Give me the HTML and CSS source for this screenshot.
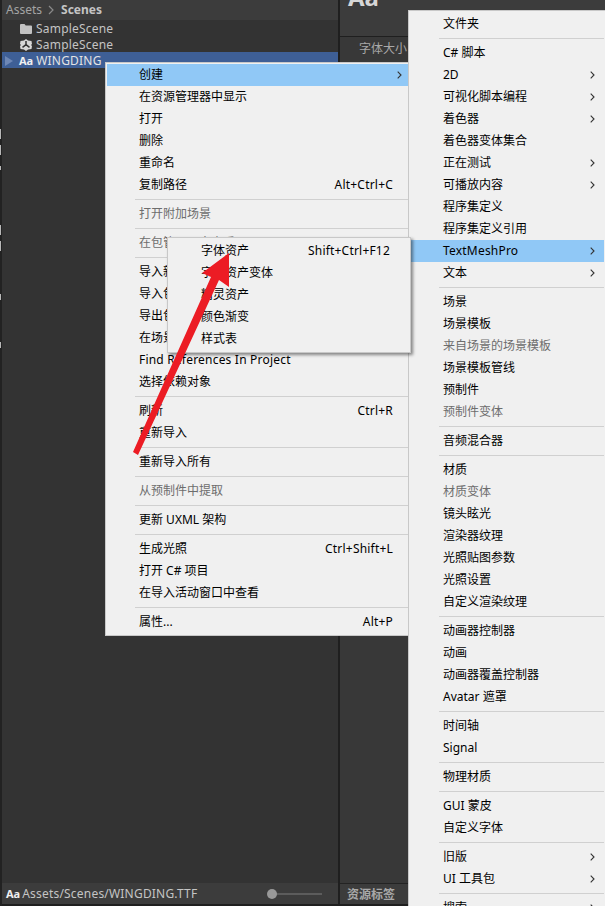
FILE: index.html
```html
<!DOCTYPE html>
<html lang="zh-CN">
<head>
<meta charset="utf-8">
<title>Unity Project Context Menu</title>
<link rel="stylesheet" href="styles.css">
</head>
<body>
<div class="editor">
  <div class="edge"></div>
  <section class="project">
    <header class="crumbs">
      <span>Assets</span>
      <svg class="crumb-sep" width="6" height="10" viewBox="0 0 6 10"><path d="M1 1l4 4-4 4" fill="none" stroke="#8a8a8a" stroke-width="1.2"/></svg>
      <strong>Scenes</strong>
    </header>
    <div class="assets">
      <div class="asset">
        <svg class="asset-icon" width="12" height="12" viewBox="0 0 12 12"><path d="M0 2a1 1 0 0 1 1-1h3.500l1.200 1.500H11a1 1 0 0 1 1 1V10a1 1 0 0 1-1 1H1a1 1 0 0 1-1-1z" fill="#c2c2c2"/></svg>
        <span class="lat">SampleScene</span>
      </div>
      <div class="asset">
        <svg class="asset-icon" width="12" height="12" viewBox="0 0 12 12"><path d="M6 0l2 1.600L11.500 2l.5 3-1 1 1 1-.5 3-3.500.4L6 12l-2-1.600L.5 10 0 7l1-1-1-1 .5-3L4 1.600z" fill="#d8d8d8"/><path d="M6 2v3.700M6 5.700L2.500 8.300M6 5.700L9.500 8.300" stroke="#333" stroke-width="1.500" fill="none"/></svg>
        <span class="lat">SampleScene</span>
      </div>
      <div class="asset asset-selected">
        <svg class="asset-toggle" width="8" height="10" viewBox="0 0 8 10"><path d="M0 0l8 5-8 5z" fill="#6d87b5"/></svg>
        <b class="aa">Aa</b>
        <span class="lat">WINGDING</span>
      </div>
    </div>
    <footer class="status">
      <b class="aa aa-small">Aa</b>
      <span class="path lat">Assets/Scenes/WINGDING.TTF</span>
      <div class="slider"><i class="knob"></i></div>
    </footer>
  </section>
  <section class="inspector">
    <header class="inspector-head"><b>Aa</b></header>
    <div class="inspector-body"><span>字体大小</span></div>
    <footer class="labels">资源标签</footer>
  </section>
</div>

<div class="menu menu-main">
  <div class="item active sub"><span>创建</span><svg class="chev" width="5" height="8" viewBox="0 0 5 8"><path d="M.7.700L4 4 .7 7.300" fill="none" stroke="#333" stroke-width="1.100"/></svg></div>
  <div class="item"><span>在资源管理器中显示</span></div>
  <div class="item"><span>打开</span></div>
  <div class="item"><span>删除</span></div>
  <div class="item"><span>重命名</span></div>
  <div class="item"><span>复制路径</span><span class="lat">Alt+Ctrl+C</span></div>
  <div class="sep"></div>
  <div class="item off"><span>打开附加场景</span></div>
  <div class="sep"></div>
  <div class="item off"><span>在包管理器中查看</span></div>
  <div class="sep"></div>
  <div class="item"><span>导入新资产...</span></div>
  <div class="item"><span>导入包</span></div>
  <div class="item"><span>导出包...</span></div>
  <div class="item"><span>在场景中查找引用</span></div>
  <div class="item"><span class="lat">Find References In Project</span></div>
  <div class="item"><span>选择依赖对象</span></div>
  <div class="sep"></div>
  <div class="item"><span>刷新</span><span class="lat">Ctrl+R</span></div>
  <div class="item"><span>重新导入</span></div>
  <div class="sep"></div>
  <div class="item"><span>重新导入所有</span></div>
  <div class="sep"></div>
  <div class="item off"><span>从预制件中提取</span></div>
  <div class="sep"></div>
  <div class="item"><span>更新 UXML 架构</span></div>
  <div class="sep"></div>
  <div class="item"><span>生成光照</span><span class="lat">Ctrl+Shift+L</span></div>
  <div class="item"><span>打开 C# 项目</span></div>
  <div class="item"><span>在导入活动窗口中查看</span></div>
  <div class="sep"></div>
  <div class="item"><span>属性...</span><span class="lat">Alt+P</span></div>
</div>

<div class="menu menu-create">
  <div class="item"><span>文件夹</span></div>
  <div class="sep"></div>
  <div class="item"><span>C# 脚本</span></div>
  <div class="item sub"><span>2D</span><svg class="chev" width="5" height="8" viewBox="0 0 5 8"><path d="M.7.700L4 4 .7 7.300" fill="none" stroke="#333" stroke-width="1.100"/></svg></div>
  <div class="item sub"><span>可视化脚本编程</span><svg class="chev" width="5" height="8" viewBox="0 0 5 8"><path d="M.7.700L4 4 .7 7.300" fill="none" stroke="#333" stroke-width="1.100"/></svg></div>
  <div class="item sub"><span>着色器</span><svg class="chev" width="5" height="8" viewBox="0 0 5 8"><path d="M.7.700L4 4 .7 7.300" fill="none" stroke="#333" stroke-width="1.100"/></svg></div>
  <div class="item"><span>着色器变体集合</span></div>
  <div class="item sub"><span>正在测试</span><svg class="chev" width="5" height="8" viewBox="0 0 5 8"><path d="M.7.700L4 4 .7 7.300" fill="none" stroke="#333" stroke-width="1.100"/></svg></div>
  <div class="item sub"><span>可播放内容</span><svg class="chev" width="5" height="8" viewBox="0 0 5 8"><path d="M.7.700L4 4 .7 7.300" fill="none" stroke="#333" stroke-width="1.100"/></svg></div>
  <div class="item"><span>程序集定义</span></div>
  <div class="item"><span>程序集定义引用</span></div>
  <div class="item active sub"><span class="lat">TextMeshPro</span><svg class="chev" width="5" height="8" viewBox="0 0 5 8"><path d="M.7.700L4 4 .7 7.300" fill="none" stroke="#333" stroke-width="1.100"/></svg></div>
  <div class="item sub"><span>文本</span><svg class="chev" width="5" height="8" viewBox="0 0 5 8"><path d="M.7.700L4 4 .7 7.300" fill="none" stroke="#333" stroke-width="1.100"/></svg></div>
  <div class="sep"></div>
  <div class="item"><span>场景</span></div>
  <div class="item"><span>场景模板</span></div>
  <div class="item off"><span>来自场景的场景模板</span></div>
  <div class="item"><span>场景模板管线</span></div>
  <div class="item"><span>预制件</span></div>
  <div class="item off"><span>预制件变体</span></div>
  <div class="sep"></div>
  <div class="item"><span>音频混合器</span></div>
  <div class="sep"></div>
  <div class="item"><span>材质</span></div>
  <div class="item off"><span>材质变体</span></div>
  <div class="item"><span>镜头眩光</span></div>
  <div class="item"><span>渲染器纹理</span></div>
  <div class="item"><span>光照贴图参数</span></div>
  <div class="item"><span>光照设置</span></div>
  <div class="item"><span>自定义渲染纹理</span></div>
  <div class="sep"></div>
  <div class="item"><span>动画器控制器</span></div>
  <div class="item"><span>动画</span></div>
  <div class="item"><span>动画器覆盖控制器</span></div>
  <div class="item"><span>Avatar 遮罩</span></div>
  <div class="sep"></div>
  <div class="item"><span>时间轴</span></div>
  <div class="item"><span>Signal</span></div>
  <div class="sep"></div>
  <div class="item"><span>物理材质</span></div>
  <div class="sep"></div>
  <div class="item"><span>GUI 蒙皮</span></div>
  <div class="item"><span>自定义字体</span></div>
  <div class="sep"></div>
  <div class="item sub"><span>旧版</span><svg class="chev" width="5" height="8" viewBox="0 0 5 8"><path d="M.7.700L4 4 .7 7.300" fill="none" stroke="#333" stroke-width="1.100"/></svg></div>
  <div class="item sub"><span>UI 工具包</span><svg class="chev" width="5" height="8" viewBox="0 0 5 8"><path d="M.7.700L4 4 .7 7.300" fill="none" stroke="#333" stroke-width="1.100"/></svg></div>
  <div class="sep"></div>
  <div class="item sub"><span>搜索</span><svg class="chev" width="5" height="8" viewBox="0 0 5 8"><path d="M.7.700L4 4 .7 7.300" fill="none" stroke="#333" stroke-width="1.100"/></svg></div>
</div>

<div class="menu menu-tmp">
  <div class="item"><span>字体资产</span><span class="lat">Shift+Ctrl+F12</span></div>
  <div class="item"><span>字体资产变体</span></div>
  <div class="item"><span>精灵资产</span></div>
  <div class="item"><span>颜色渐变</span></div>
  <div class="item"><span>样式表</span></div>
</div>

<svg class="arrow" width="605" height="906" viewBox="0 0 605 906"><polygon points="229,253 229,287 219,280 138,455 133,452 211,277 202,273" fill="#ec1c24"/></svg>
</body>
</html>
```

FILE: styles.css
```css
* { box-sizing: border-box; }

html, body {
  margin: 0;
  height: 906px;
  overflow: hidden;
}

body {
  position: relative;
  background: #1f1f1f;
  font: 12px/16px "Noto Sans", "Noto Sans CJK SC", sans-serif;
}

.lat {
  letter-spacing: .2px;
}

.editor {
  display: flex;
  height: 906px;
}

.edge {
  width: 2px;
  flex: none;
  background-color: #222;
  background-repeat: no-repeat;
  background-size: 1px 100%;
  background-image: linear-gradient(to bottom,
    #222 0 129px, #b8b8b8 129px 139px, #222 139px 145px, #b8b8b8 145px 155px,
    #222 155px 166px, #b8b8b8 166px 170px, #222 170px 225px, #b8b8b8 225px 235px,
    #222 235px 241px, #b8b8b8 241px 251px, #222 251px 294px, #b8b8b8 294px 300px,
    #222 300px 342px, #b8b8b8 342px 348px, #222 348px);
}

.project {
  width: 336px;
  flex: none;
  display: flex;
  flex-direction: column;
  height: 904px;
  background: #333;
  margin-right: 2px;
}

.crumbs {
  height: 20px;
  flex: none;
  display: flex;
  align-items: center;
  gap: 6px;
  padding-left: 4px;
  background: #3c3c3c;
  color: #a4a4a4;
}

.crumbs strong {
  margin-left: 1px;
  color: #c4c4c4;
  font-weight: 700;
}

.assets {
  flex: 1;
}

.asset {
  height: 16px;
  display: flex;
  align-items: center;
  padding: 2px 0 0 18px;
  color: #c4c4c4;
}

.asset-icon {
  margin-right: 4px;
  flex: none;
}

.asset-selected {
  padding-left: 3px;
  background: #3e5f96;
  color: #e4e4e4;
}

.asset-toggle {
  margin-right: 6px;
  flex: none;
}

.aa {
  margin-right: 3px;
  font-size: 11px;
  font-weight: 700;
  color: #f0f0f0;
}

.status {
  height: 21px;
  flex: none;
  display: flex;
  align-items: center;
  padding-left: 4px;
  background: #3c3c3c;
  color: #c4c4c4;
}

.aa-small {
  margin-right: 2px;
}

.slider {
  position: relative;
  width: 50px;
  height: 2px;
  margin: 0 16px 0 auto;
  background: #5c5c5c;
}

.knob {
  position: absolute;
  left: -5px;
  top: -4px;
  width: 10px;
  height: 10px;
  border-radius: 50%;
  background: #999;
}

.inspector {
  flex: 1;
  display: flex;
  flex-direction: column;
  height: 904px;
  background: #383838;
  color: #a8a8a8;
}

.inspector-head {
  height: 37px;
  flex: none;
  overflow: hidden;
  padding-left: 8px;
  background: #3c3c3c;
  border-bottom: 1px solid #1f1f1f;
}

.inspector-head b {
  display: block;
  margin-top: -19px;
  font-size: 24px;
  line-height: 32px;
  color: #d6d6d6;
}

.inspector-body {
  flex: 1;
  padding: 4px 0 0 19px;
}

.labels {
  height: 21px;
  flex: none;
  padding-left: 7px;
  line-height: 21px;
  font-weight: 700;
  background: #3c3c3c;
  border-top: 1px solid #232323;
}

.menu {
  position: absolute;
  background: #f0f0f0;
  border: 1px solid #c8c8c8;
  padding: 1px;
  color: #000;
}

.menu-main {
  left: 105px;
  top: 62px;
  width: 305px;
  height: 574px;
}

.menu-create {
  left: 408px;
  top: 10px;
  width: 200px;
  padding: 2px 1px 0;
}

.menu-tmp {
  left: 167px;
  top: 237px;
  width: 244px;
  height: 116px;
  padding-top: 2px;
  box-shadow: 2px 2px 3px rgba(0, 0, 0, .45);
}

.item {
  height: 22px;
  display: flex;
  align-items: center;
  justify-content: space-between;
  padding: 0 15px 0 32px;
  white-space: nowrap;
}

.menu-create .item {
  padding-left: 33px;
  margin-right: 2px;
}

.menu-tmp .item {
  padding-right: 19px;
}

.sub {
  padding-right: 6px;
}

.menu-create .sub {
  padding-right: 9px;
}

.off {
  color: #6d6d6d;
}

.active {
  background: #90c8f6;
}

.sep {
  height: 7px;
  margin-left: 28px;
  padding-top: 3px;
}

.sep::before {
  content: "";
  display: block;
  height: 1px;
  background: #d0d0d0;
}

.menu-create .sep {
  margin: 0 2px 0 29px;
}

.chev {
  flex: none;
}

.arrow {
  position: absolute;
  left: 0;
  top: 0;
  pointer-events: none;
}
```
